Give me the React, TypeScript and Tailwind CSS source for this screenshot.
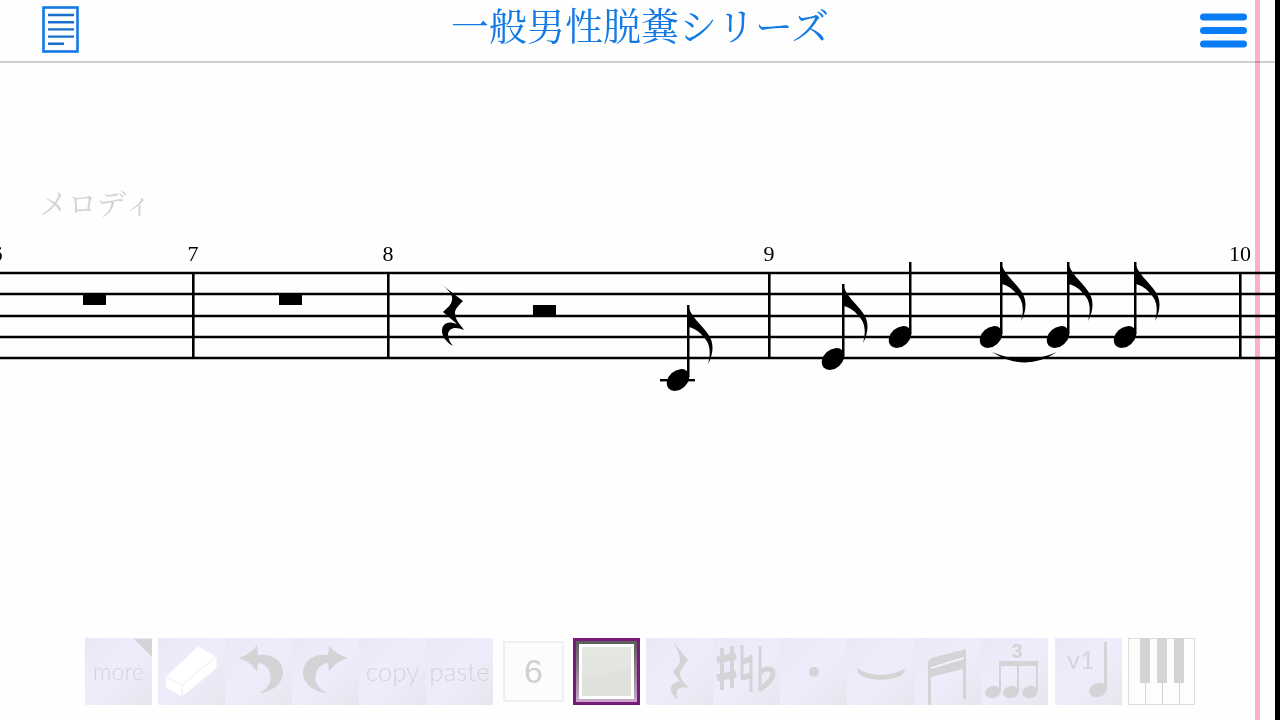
import type { ReactNode } from "react";

type ToolProps = {
  label: string;
  children: ReactNode;
};

const Tool = ({ label, children }: ToolProps) => (
  <button
    type="button"
    aria-label={label}
    className="flex h-[67px] w-[67px] shrink-0 items-center justify-center overflow-hidden bg-linear-to-br from-[#e8e8f6] via-[#eeedfc] to-[#e6e6ef]"
  >
    {children}
  </button>
);

const Icon = ({ children }: { children: ReactNode }) => (
  <svg width="67" height="67" viewBox="0 0 67 67" fill="#d3d4d5" className="block">
    {children}
  </svg>
);

const UNDO_PATH =
  "M13 20C21 18 28 13 32 7L33 17C48 15 58 24 58 34C58 46 47 54 34 55C44 50 47 43 45 36C44 30 40 26 33 25L32 34C28 27 21 22 13 20Z";

const staffLines = [33, 54, 76, 97, 118];

const measures = [
  { number: 6, x: -3 },
  { number: 7, x: 193 },
  { number: 8, x: 388 },
  { number: 9, x: 769 },
  { number: 10, x: 1240 },
];

const notes = [
  { x: 678, y: 140, flag: true },
  { x: 833, y: 119, flag: true },
  { x: 900, y: 97, flag: false },
  { x: 991, y: 97, flag: true },
  { x: 1058, y: 97, flag: true },
  { x: 1125, y: 97, flag: true },
];

const Note = ({ x, y, flag }: { x: number; y: number; flag: boolean }) => (
  <g transform={`translate(${x} ${y})`}>
    <ellipse rx="12.6" ry="9.3" transform="rotate(-42)" />
    <rect x="9" y="-75" width="2.5" height="72" />
    {flag && (
      <path d="M10 -75C12 -64 23 -56 30 -46C36 -38 36 -27 30 -16C33 -26 32 -35 28 -40C23 -47 17 -52 10 -53Z" />
    )}
  </g>
);

const Score = () => (
  <svg className="block h-[160px] w-full" role="img" aria-label="Score">
    {staffLines.map((y) => (
      <line key={y} x1="0" x2="100%" y1={y} y2={y} stroke="#000" strokeWidth="2.4" />
    ))}
    {measures.map((m) => (
      <g key={m.number}>
        <rect x={m.x - 1} y="33" width="2.6" height="85" />
        <text
          x={m.x}
          y="21"
          textAnchor="middle"
          className="font-['Liberation_Serif',serif] text-[22px]"
        >
          {m.number}
        </text>
      </g>
    ))}

    {/* whole rests and half rest */}
    <rect x="83" y="54" width="23" height="11" />
    <rect x="279" y="54" width="23" height="11" />
    <rect x="533" y="65" width="23" height="11" />
    <rect x="521" y="75" width="46" height="2" />

    {/* quarter rest */}
    <path d="M441 44L463 61C458 66 455 69 455 73C455 80 460 84 464 90C455 86 449 88 448 94C448 99 450 102 453 106C446 102 442 96 442 91C442 84 447 80 457 84L443 72C448 67 453 64 452 57C451 52 446 48 441 44Z" />

    {/* ledger line */}
    <rect x="660" y="139" width="35" height="2.4" />
    {notes.map((n) => (
      <Note key={n.x} {...n} />
    ))}
    <path d="M992 112Q1025 133 1057 112Q1025 126 992 112Z" />
  </svg>
);

const Header = () => (
  <header className="grid h-[63px] shrink-0 grid-cols-[1fr_auto_1fr] items-start border-b-2 border-[#cfcfcf] px-[33px]">
    <button type="button" aria-label="Songs" className="mt-[6px] ml-[9px] justify-self-start">
      <svg width="37" height="47" viewBox="0 0 37 47" fill="none" stroke="#1479e6">
        <rect x="1.5" y="1.5" width="34" height="44" strokeWidth="2.6" />
        <path d="M6 9H32M6 16.2H32M6 23.4H32M6 30.6H32M6 37.8H22" strokeWidth="2.4" stroke="#1a6fcb" />
      </svg>
    </button>
    <h1 className="font-['Noto_Serif_CJK_JP','Noto_Sans_CJK_JP',serif] text-[38px] leading-[48px] font-normal whitespace-nowrap text-[#147be6]">
      一般男性脱糞シリーズ
    </h1>
    <button type="button" aria-label="Menu" className="mt-[13px] justify-self-end">
      <svg width="47" height="35" viewBox="0 0 47 35" fill="#087df7">
        <rect y="0.5" width="47" height="7" rx="3.5" />
        <rect y="14" width="47" height="7" rx="3.5" />
        <rect y="27.5" width="47" height="7" rx="3.5" />
      </svg>
    </button>
  </header>
);

const Toolbar = () => (
  <footer className="flex shrink-0 items-center justify-center pb-[15px] font-['Lato',sans-serif] text-[#d3d4da]">
    <button
      type="button"
      className="relative flex h-[67px] w-[67px] items-center justify-center bg-linear-to-br from-[#e8e8f6] via-[#eeedfc] to-[#e6e6ef] text-[23px] font-light"
    >
      more
      <svg width="18" height="18" className="absolute top-px right-0" fill="#d3d4d5">
        <path d="M0 0H18V18Z" />
      </svg>
    </button>

    <div className="ml-[6px] flex">
      <Tool label="Eraser">
        <Icon>
          <path d="M40 9L58 19V30L24 58L9 50L8 39Z" fill="#fff" stroke="#fff" strokeLinejoin="round" />
          <path d="M8 39L24 47L58 19M24 47V58" fill="none" stroke="#ececf1" />
        </Icon>
      </Tool>
      <Tool label="Undo">
        <Icon>
          <path d={UNDO_PATH} />
        </Icon>
      </Tool>
      <Tool label="Redo">
        <Icon>
          <path d={UNDO_PATH} transform="translate(69 0) scale(-1 1)" />
        </Icon>
      </Tool>
      <button
        type="button"
        className="flex h-[67px] w-[67px] items-center justify-center bg-linear-to-br from-[#e8e8f6] via-[#eeedfc] to-[#e6e6ef] text-[26px] font-light"
      >
        copy
      </button>
      <button
        type="button"
        className="flex h-[67px] w-[67px] items-center justify-center bg-linear-to-br from-[#e8e8f6] via-[#eeedfc] to-[#e6e6ef] text-[26px] font-light"
      >
        paste
      </button>
    </div>

    <button
      type="button"
      className="ml-[10px] h-[61px] w-[61px] border-2 border-[#f0f0f0] bg-[#fcfcfc] font-['Liberation_Sans',sans-serif] text-[34px] text-[#d0d0d0]"
    >
      6
    </button>

    <button
      type="button"
      aria-label="Note length"
      className="ml-[9px] flex h-[67px] w-[67px] border-3 border-[#771a78] bg-linear-to-b from-[#5d5d5d] to-[#c9a8c9] p-[3px]"
    >
      <span className="block h-full w-full border-3 border-white bg-linear-to-b from-[#e5e7e1] to-[#e1e3de]">
        <svg width="100%" height="100%" viewBox="0 0 49 49" preserveAspectRatio="none" className="block">
          <path d="M0 30C18 28 34 26 49 21V49H0Z" fill="#dfe1dc" />
        </svg>
      </span>
    </button>

    <div className="ml-[6px] flex">
      <Tool label="Rest">
        <Icon>
          <path d="M28 5L42 22C39 27 35 30 34 35C34 41 39 46 43 50C37 48 32 50 31 53C30 56 31 59 32 62C27 58 24 53 25 49C27 45 31 43 34 44L27 34C29 29 33 28 34 23C34 17 31 11 28 5Z" />
        </Icon>
      </Tool>
      <Tool label="Accidentals">
        <Icon>
          <g fill="none" stroke="#d3d4d5">
            <path d="M9 10V52M19 8V50" strokeWidth="4" />
            <path d="M4 22L23 18M4 40L23 36" strokeWidth="7" />
            <path d="M29 7V42M38 17V54" strokeWidth="3" />
            <path d="M29 24L38 21M29 40L38 37" strokeWidth="6" />
            <path d="M47 8V53" strokeWidth="3" />
            <path d="M47 35C52 29 60 30 60 36C59 43 53 46 47 52" strokeWidth="5" />
          </g>
        </Icon>
      </Tool>
      <Tool label="Dot">
        <Icon>
          <circle cx="34" cy="34" r="5" />
        </Icon>
      </Tool>
      <Tool label="Tie">
        <Icon>
          <path d="M10 30C21 39 47 39 58 30L57 35C49 44 19 44 11 35Z" />
        </Icon>
      </Tool>
      <Tool label="Beam">
        <Icon>
          <path d="M14 24L17 20L52 11V61H49V31L17 39V67H14Z" />
          <path d="M17 29L50 19V21L17 31Z" fill="#f3f3fb" />
        </Icon>
      </Tool>
      <Tool label="Triplet">
        <Icon>
          <path d="M18 23H57V54H55V28H38V54H36V28H20V54H18Z" />
          <ellipse cx="12" cy="54" rx="8" ry="6" transform="rotate(-15 12 54)" />
          <ellipse cx="30" cy="54" rx="8" ry="6" transform="rotate(-15 30 54)" />
          <ellipse cx="49" cy="54" rx="8" ry="6" transform="rotate(-15 49 54)" />
          <text x="36" y="20" textAnchor="middle" className="font-['Liberation_Sans',sans-serif] text-[20px] font-bold">
            3
          </text>
        </Icon>
      </Tool>
    </div>

    <button
      type="button"
      aria-label="Voice 1"
      className="ml-[7px] h-[67px] w-[67px] bg-linear-to-br from-[#e8e8f6] via-[#eeedfc] to-[#e6e6ef]"
    >
      <Icon>
        <text x="12" y="31" className="font-['Lato',sans-serif] text-[25px]">
          v1
        </text>
        <rect x="49" y="4" width="3" height="47" />
        <ellipse cx="43" cy="52" rx="9" ry="7" transform="rotate(-20 43 52)" />
      </Icon>
    </button>

    <button type="button" aria-label="Keyboard" className="ml-[6px] h-[67px] w-[67px] bg-[#fdfdfd]">
      <Icon>
        <rect x="0.5" y="0.5" width="66" height="66" fill="none" stroke="#dcdcdc" />
        <path d="M12 0H22V45H12ZM29 0H39V45H29ZM46 0H56V45H46Z" />
        <path d="M17 45H18V66H17ZM34 45H35V66H34ZM51 45H52V66H51Z" />
      </Icon>
    </button>
  </footer>
);

export default function App() {
  return (
    <div className="relative flex min-h-screen flex-col bg-[#fefefe] text-black">
      <Header />
      <main className="flex-1">
        <p className="pt-[120px] pl-[39px] font-['Noto_Serif_CJK_JP','Noto_Sans_CJK_JP',serif] text-[29px] leading-[40px] font-normal text-[#d3d3d3]">
          メロディ
        </p>
        <div className="pt-[17px]">
          <Score />
        </div>
      </main>
      <Toolbar />

      {/* playback cursor and screen edge */}
      <div className="absolute inset-y-0 right-[20px] w-[5px] bg-[#ffb0d0] mix-blend-multiply" />
      <div className="absolute inset-y-0 right-0 w-[5px] bg-black" />
    </div>
  );
}
